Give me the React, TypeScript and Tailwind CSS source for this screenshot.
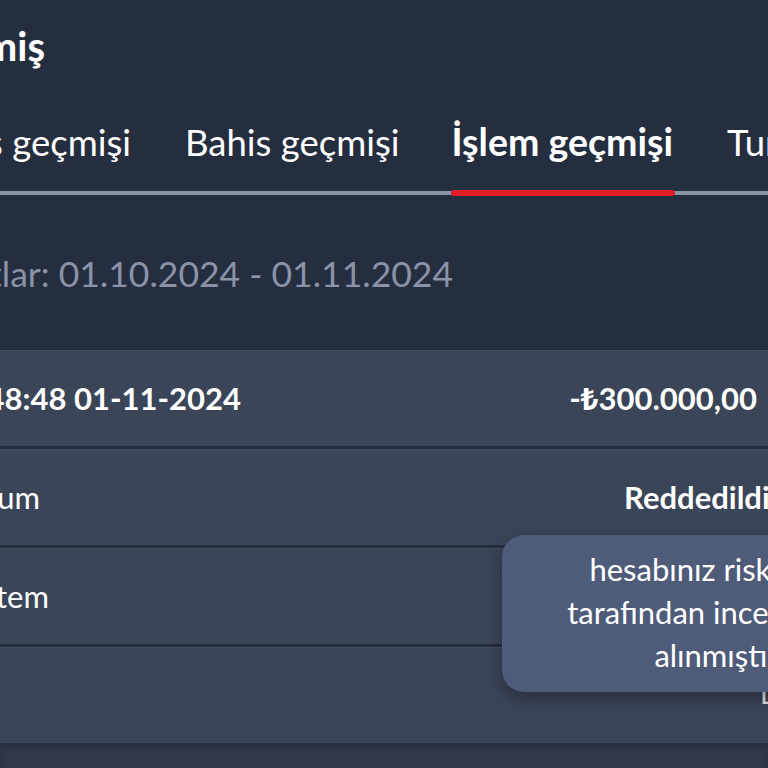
import React from "react";

export default function App() {
  return (
    <div className="relative w-[768px] h-[768px] overflow-hidden bg-[#252e3f] text-white font-[Lato,sans-serif]">
      {/* Title */}
      <div className="pt-[26px]">
        <div className="flex w-[45px] justify-end whitespace-nowrap text-[40px] font-bold leading-none">
          <span className="shrink-0">Geçmiş</span>
        </div>
      </div>

      {/* Tabs */}
      <div className="mt-[57px] flex items-end gap-[54px] whitespace-nowrap border-b-4 border-[#8892a5] text-[36.5px] leading-none">
        <div className="flex w-[131px] shrink-0 justify-end pb-[30px]">
          <span className="shrink-0">Bonus geçmişi</span>
        </div>
        <div className="shrink-0 pb-[30px]">Bahis geçmişi</div>
        <div className="relative -ml-[2px] shrink-0 pb-[30px] text-[37.5px] font-bold">
          İşlem geçmişi
          <span className="absolute left-0 -right-[2px] -bottom-[5px] h-[6px] rounded-full bg-[#e11d2a]" />
        </div>
        <div className="shrink-0 pb-[30px]">Turnuva geçmişi</div>
      </div>

      {/* Date range */}
      <div className="mt-[61px] flex w-[453px] justify-end whitespace-nowrap text-[35.5px] leading-none text-[#8a93a7]">
        <span className="shrink-0">Kayıtlar: 01.10.2024 - 01.11.2024</span>
      </div>

      {/* Rows */}
      <div className="mt-[59px] flex flex-col gap-[3px]">
        <div className="flex h-[96px] items-center whitespace-nowrap border-t border-white/5 bg-[#3b4558] text-[31px] font-bold leading-none">
          <div className="flex w-[241px] shrink-0 justify-end">
            <span className="shrink-0">12:48:48 01-11-2024</span>
          </div>
          <span className="ml-auto mr-[11px] shrink-0">
            -<span className="font-['Noto_Sans',sans-serif]">₺</span>300.000,00
          </span>
        </div>
        <div className="flex h-[96px] items-center whitespace-nowrap border-t border-white/5 bg-[#3b4558] text-[31px] leading-none">
          <div className="flex w-[40px] shrink-0 justify-end">
            <span className="shrink-0">Durum</span>
          </div>
          <span className="ml-[584px] shrink-0 font-bold">Reddedildi</span>
        </div>
        <div className="flex h-[96px] items-center whitespace-nowrap border-t border-white/5 bg-[#3b4558] text-[31px] leading-none">
          <div className="flex w-[49px] shrink-0 justify-end">
            <span className="shrink-0">Sistem</span>
          </div>
        </div>
        <div className="flex h-[96px] items-start whitespace-nowrap border-t border-white/5 bg-[#3b4558] leading-none">
          <span className="ml-[761px] mt-[38px] shrink-0 text-[20px] font-bold text-[#dfe2e8]">Detay</span>
        </div>
      </div>
      <div className="h-[30px] bg-[#30384a] shadow-[inset_0_4px_4px_rgba(0,0,0,0.15)]" />

      {/* Tooltip */}
      <div className="absolute left-[502px] top-[535px] h-[157px] w-[429px] rounded-[22px] bg-[#4f5c79] pt-[13px] text-center text-[31px] leading-[43px] text-white shadow-[0_6px_18px_rgba(0,0,0,0.35)] whitespace-nowrap">
        <div>hesabınız risk ekibi</div>
        <div>tarafından incelemeye</div>
        <div>alınmıştır</div>
      </div>
    </div>
  );
}
